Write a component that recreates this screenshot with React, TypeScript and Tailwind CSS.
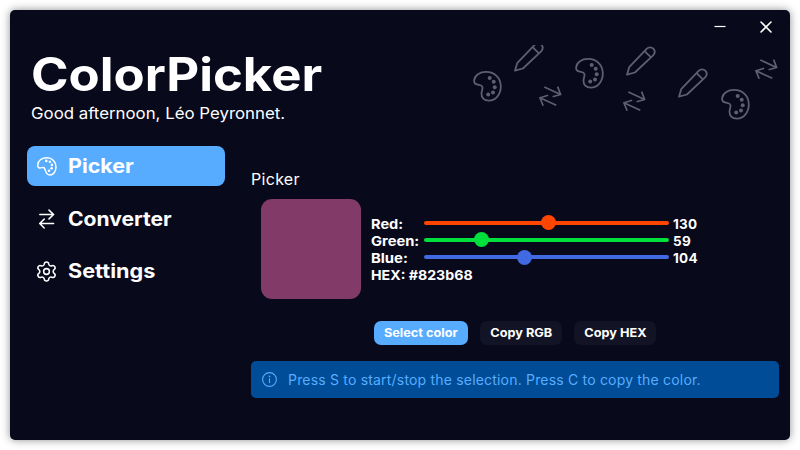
import React from "react";
import { Settings } from "lucide-react";

type IconProps = { className: string };

function TiltedPalette({ className }: IconProps) {
  return (
    <svg className={className} width="29" height="31" viewBox="0 0 29 31" fill="none" stroke="currentColor" strokeWidth="1.8">
      <path d="M1.1 9.5C1.5 4 7 .9 13 .9c9 0 14.8 6.1 14.8 14.6 0 8-5.3 14.1-12 14.1-4.8 0-7.5-3-7.3-7.1.2-3.5 1.6-4.7.9-6.7-.6-2-2.6-1.8-4.6-2.2-2.6-.3-3.8-1.8-3.7-4.1Z" />
      <g fill="currentColor" stroke="none">
        <circle cx="16.7" cy="7" r="2" />
        <circle cx="20.7" cy="10.8" r="2" />
        <circle cx="21.7" cy="16.2" r="2" />
        <circle cx="20" cy="21.5" r="2" />
        <circle cx="15.2" cy="23.4" r="2" />
      </g>
    </svg>
  );
}

function TiltedPencil({ className }: IconProps) {
  return (
    <svg className={className} width="30" height="30" viewBox="0 0 30 30" fill="none" stroke="currentColor" strokeWidth="1.8" strokeLinejoin="round">
      <path d="M1 28.7 3.2 21.2 20.6 2.9c2-1.9 4.8-2 6.7-.2 1.8 1.9 1.7 4.6-.2 6.6L8.9 26.5Z" />
      <path d="m18.6 5.2 6.6 6.4" />
    </svg>
  );
}

function TiltedArrows({ className }: IconProps) {
  return (
    <svg className={className} width="23" height="21" viewBox="0 0 23 21" fill="none" stroke="currentColor" strokeWidth="1.7">
      <path d="M5.3 1 21.6 8.4M18.6.6l3 7.9-8 2.3M17.3 19.3.9 11.8M9.2 9.3.9 11.8l3.3 8" />
    </svg>
  );
}

function PaletteIcon() {
  return (
    <svg width="20" height="19" viewBox="0 0 20 19" fill="none" stroke="currentColor" strokeWidth="1.5">
      <path d="M.8 8C1.1 3.5 5 .8 10 .8c5.3 0 9 3.9 9 9.2 0 4.6-2.6 7.9-6.2 7.9-4.6 0-4-5.2-5.5-7C5.8 9.4 4.5 11.4 2.5 11 1 10.7.7 9.5.8 8Z" />
      <g fill="currentColor" stroke="none">
        <circle cx="9.3" cy="3.9" r="1.3" />
        <circle cx="12.9" cy="4.8" r="1.3" />
        <circle cx="14.9" cy="7.9" r="1.3" />
        <circle cx="14.6" cy="11.3" r="1.3" />
        <circle cx="12" cy="13.7" r="1.3" />
      </g>
    </svg>
  );
}

function ConvertIcon() {
  return (
    <svg width="20" height="20" viewBox="0 0 20 20" fill="none" stroke="currentColor" strokeWidth="1.5" strokeLinecap="round" strokeLinejoin="round">
      <path d="M2.8 5.5h13.7M12 1.1l4.6 4.4L12 9.9M16.6 14.5H2.8M7.2 10.1l-4.5 4.4L7.2 19" />
    </svg>
  );
}

const channels = [
  { name: "Red:", value: 130, label: "scale-x-[1.08]", track: "bg-[#ff4500]", thumb: "left-[117px] -top-[6px] bg-[#ff4500]" },
  { name: "Green:", value: 59, label: "scale-x-[1.09]", track: "bg-[#00e03c]", thumb: "left-[50px] -top-[6px] bg-[#00e03c]" },
  { name: "Blue:", value: 104, label: "scale-x-[1.1]", track: "bg-[#4169e1]", thumb: "left-[93px] -top-[5px] bg-[#4169e1]" },
];

const nav = [
  { name: "Picker", icon: <PaletteIcon />, row: "bg-[#58acff]", text: "scale-x-[1.1]" },
  { name: "Converter", icon: <ConvertIcon />, row: "mt-[13px]", text: "scale-x-[1.08]" },
  { name: "Settings", icon: <Settings size={23} strokeWidth={1.6} className="-ml-[2px] -mr-[1px] shrink-0" />, row: "mt-3", text: "scale-x-[1.11]" },
];

const buttons = [
  { name: "Select color", style: "w-[94px] bg-[#58acff]" },
  { name: "Copy RGB", style: "w-[82px] bg-[#121325]" },
  { name: "Copy HEX", style: "w-[82px] bg-[#121325]" },
];

export default function App() {
  return (
    <div className="h-[450px] w-[800px] overflow-hidden bg-white p-[10px] font-['Inter',sans-serif] text-white">
      <div className="relative flex h-[430px] w-[780px] flex-col rounded-[5px] bg-[#08091b] shadow-[0_0_9px_rgba(0,0,0,0.45)]">
        <div className="flex h-[35px] shrink-0 justify-end gap-[34px] pr-[18px] pt-[11px]">
          <svg width="12" height="12" viewBox="0 0 12 12" stroke="currentColor" strokeWidth="1.2">
            <path d="M.5 5.5h11" />
          </svg>
          <svg width="12" height="12" viewBox="0 0 12 12" stroke="currentColor" strokeWidth="1.6" strokeLinecap="round">
            <path d="m1 1 10 10M11 1 1 11" />
          </svg>
        </div>

        <div className="absolute left-[460px] top-[35px] h-[85px] w-[308px] overflow-hidden text-[#5e5f70]">
          <TiltedPalette className="absolute left-[3px] top-[26px]" />
          <TiltedPencil className="absolute left-[44px] top-[-3px]" />
          <TiltedArrows className="absolute left-[69px] top-[41px]" />
          <TiltedPalette className="absolute left-[105px] top-[13px]" />
          <TiltedPencil className="absolute left-[156px] top-[1px]" />
          <TiltedArrows className="absolute left-[153px] top-[46px]" />
          <TiltedPencil className="absolute left-[208px] top-[23px]" />
          <TiltedPalette className="absolute left-[251px] top-[44px]" />
          <TiltedArrows className="absolute left-[285px] top-[14px]" />
        </div>

        <header className="flex h-[101px] shrink-0 flex-col items-start pl-[21px]">
          <h1 className="-ml-[0.5px] origin-left scale-x-[1.105] whitespace-nowrap text-[46px] font-bold leading-[58px]">ColorPicker</h1>
          <p className="origin-left scale-x-[1.051] whitespace-nowrap text-[16px] leading-5">Good afternoon, Léo Peyronnet.</p>
        </header>

        <div className="flex flex-1 pl-[17px]">
          <nav className="w-[198px] shrink-0">
            {nav.map((n) => (
              <div key={n.name} className={`flex h-10 items-center gap-[11px] rounded-[8px] pl-[10px] ${n.row}`}>
                {n.icon}
                <span className={`origin-left whitespace-nowrap text-[19.5px] font-bold leading-6 ${n.text}`}>{n.name}</span>
              </div>
            ))}
          </nav>

          <main className="ml-[26px] w-[528px] pt-[23px]">
            <h2 className="text-[16px] font-normal leading-5 tracking-[0.3px]">Picker</h2>
            <div className="ml-[10px] mt-[10px] flex">
              <div className="mt-[0.4px] h-[100px] w-[100px] shrink-0 rounded-[11px] bg-[#823b68]" />
              <div className="ml-[10px] pt-[17px] text-[13.5px] font-bold leading-[17px]">
                {channels.map((c) => (
                  <div key={c.name} className="flex h-[17px]">
                    <span className={`w-[49px] shrink-0 origin-left ${c.label}`}>{c.name}</span>
                    <div className={`relative ml-[4px] mt-[5px] h-1 w-[245px] rounded-full ${c.track}`}>
                      <span className={`absolute h-[15px] w-[15px] rounded-full ${c.thumb}`} />
                    </div>
                    <span className="ml-[4px] tracking-[0.25px]">{c.value}</span>
                  </div>
                ))}
                <div className="w-max origin-left scale-x-[1.05]">HEX: #823b68</div>
              </div>
            </div>
            <div className="ml-[123px] mt-[21.6px] flex gap-3">
              {buttons.map((b) => (
                <button key={b.name} className={`flex h-6 items-center justify-center rounded-[7px] text-[12px] font-bold ${b.style}`}>
                  <span className="scale-x-[1.06] whitespace-nowrap">{b.name}</span>
                </button>
              ))}
            </div>
            <div className="mt-4 flex h-[37px] items-center rounded-[5px] bg-[#004c97] pl-[11px] text-[#58acff]">
              <svg width="15" height="15" viewBox="0 0 15 15" fill="none" stroke="currentColor" strokeWidth="1.1">
                <circle cx="7.5" cy="7.5" r="6.9" />
                <path d="M7.5 6.3v4.8" />
                <circle cx="7.5" cy="4.4" r=".8" fill="currentColor" stroke="none" />
              </svg>
              <span className="ml-[11px] whitespace-nowrap text-[14px] font-normal tracking-[0.19px]">
                Press S to start/stop the selection. Press C to copy the color.
              </span>
            </div>
          </main>
        </div>
      </div>
    </div>
  );
}
